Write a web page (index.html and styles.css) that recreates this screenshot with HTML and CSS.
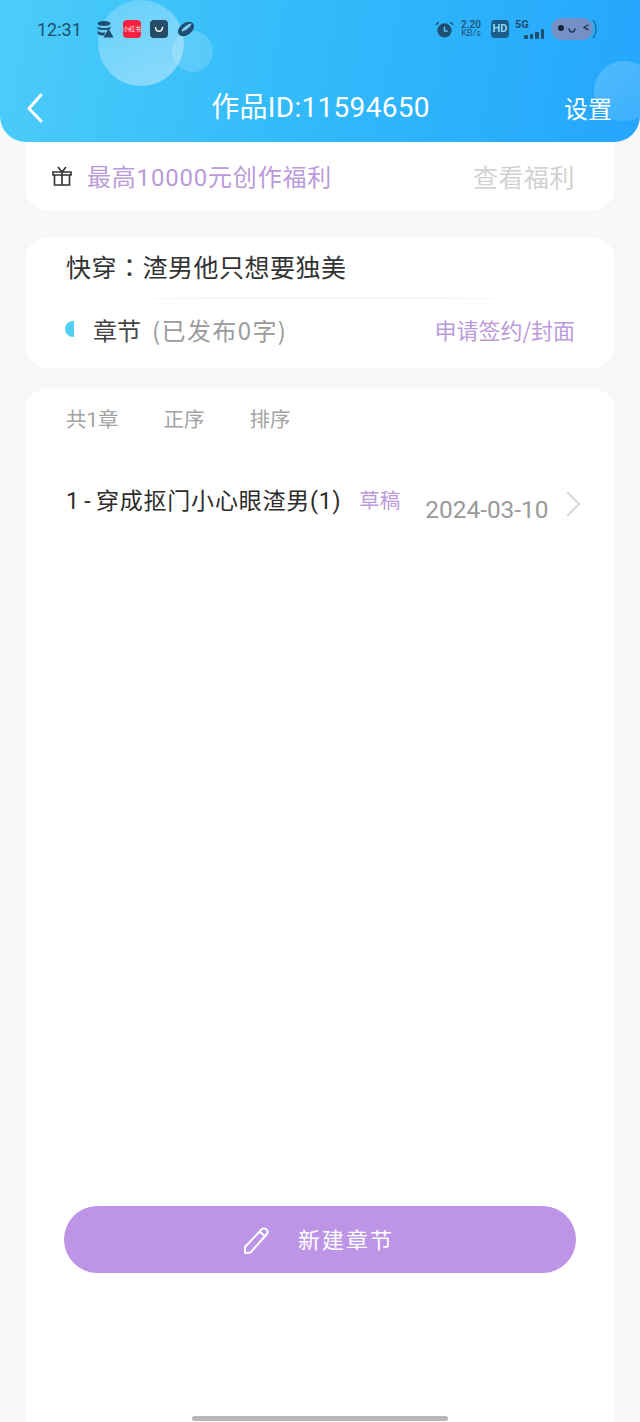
FILE: index.html
```html
<!DOCTYPE html>
<html lang="zh-CN">
<head>
    <meta charset="UTF-8">
    <meta name="viewport" content="width=device-width, initial-scale=1.0">
    <title>作品ID:11594650</title>
    <link rel="stylesheet" href="styles.css">
</head>
<body>
    <header class="top">
        <span class="bubble bubble-big"></span>
        <span class="bubble bubble-small"></span>
        <span class="bubble bubble-right"></span>

        <!-- status bar -->
        <div class="status">
            <div class="status-left">
                <span class="time">12:31</span>
                <svg class="s-icon" viewBox="0 0 18 18" width="18" height="18">
                    <ellipse cx="8" cy="3.5" rx="6.5" ry="2.5" fill="#1f4f70"/>
                    <path d="M1.500 6.500c2 2 11 2 13 0v2c-2 2-11 2-13 0zM1.500 11c2 1.500 6 1.800 8 1.300l-1.500 3.200c-3 0-5.500-.6-6.500-1.800z" fill="#1f4f70"/>
                    <path d="M12.500 8.500l5 9h-10z" fill="#1f4f70"/>
                </svg>
                <span class="red-app">小红书</span>
                <span class="bag-app">
                    <svg viewBox="0 0 18 18" width="18" height="18"><path d="M5.500 6.500c.5 5 6.500 5 7 0" fill="none" stroke="#fff" stroke-width="1.500" stroke-linecap="round"/></svg>
                </span>
                <svg class="s-icon" viewBox="0 0 18 18" width="18" height="18">
                    <ellipse cx="9" cy="9" rx="9" ry="6" transform="rotate(-38 9 9)" fill="#1f4f70"/>
                    <ellipse cx="9.500" cy="7.500" rx="6" ry="1.700" transform="rotate(-38 9.500 7.500)" fill="#7fcdf3"/>
                </svg>
            </div>
            <div class="status-right">
                <svg class="s-icon" viewBox="0 0 20 20" width="19" height="19">
                    <circle cx="10" cy="11" r="7.500" fill="#1f4f70"/>
                    <path d="M10 7v4.500h3.500" fill="none" stroke="#5cc0ee" stroke-width="1.500"/>
                    <path d="M1 5l3-3M19 5l-3-3" stroke="#1f4f70" stroke-width="1.500"/>
                </svg>
                <span class="speed"><b>2.20</b><i>KB/s</i></span>
                <span class="hd">HD</span>
                <span class="signal">
                    <span class="five-g">5G</span>
                    <span class="bars"><i class="b1"></i><i class="b2"></i><i class="b3"></i><i class="b4"></i></span>
                </span>
                <svg class="s-icon" viewBox="0 0 46 24" width="46" height="24">
                    <rect x="0" y="1" width="42" height="22" rx="11" fill="#7391c4"/>
                    <circle cx="10" cy="11" r="3" fill="#14263a"/>
                    <path d="M18 12c1 4 5 4 6 0" fill="none" stroke="#1f3b55" stroke-width="1.400" stroke-linecap="round"/>
                    <path d="M37 8l-4 2.500 4 2" fill="none" stroke="#1f3b55" stroke-width="1.400" stroke-linecap="round"/>
                    <path d="M42 3c4 5 4 13 0 18" fill="none" stroke="#1f4f70" stroke-width="1"/>
                </svg>
            </div>
        </div>

        <!-- nav -->
        <div class="nav">
            <svg class="back" viewBox="0 0 20 32" width="20" height="32">
                <path d="M16 3L4 16.500 16 29" fill="none" stroke="#fff" stroke-width="3" stroke-linecap="round" stroke-linejoin="round"/>
            </svg>
            <h1 class="nav-title">作品ID:11594650</h1>
            <span class="nav-set">设置</span>
        </div>
    </header>

    <main class="content">
        <section class="card welfare">
            <svg class="gift" viewBox="0 0 22 22" width="22" height="22">
                <path d="M2 7h18v3H2zM3.500 10v10h15V10M11 7v13M7 2l4 5 4-5" fill="none" stroke="#333" stroke-width="1.600"/>
            </svg>
            <span class="welfare-text">最高10000元创作福利</span>
            <span class="welfare-link">查看福利</span>
        </section>

        <section class="card book">
            <div class="book-title">快穿<span class="colon" lang="zh-TW">：</span>渣男他只想要独美</div>
            <div class="book-line"></div>
            <div class="book-row">
                <span class="dot"></span>
                <span class="chapter-label">章节</span>
                <span class="chapter-count">(已发布0字)</span>
                <span class="apply">申请签约/封面</span>
            </div>
        </section>

        <section class="card chapters">
            <div class="tabs">
                <span>共1章</span>
                <span>正序</span>
                <span>排序</span>
            </div>
            <div class="chapter">
                <span class="chapter-name">1 - 穿成抠门小心眼渣男(1)</span>
                <span class="draft">草稿</span>
                <span class="date">2024-03-10</span>
                <svg class="arrow" viewBox="0 0 16 26" width="16" height="26">
                    <path d="M2 2l11 11L2 24" fill="none" stroke="#d9d9d9" stroke-width="2.200" stroke-linecap="round" stroke-linejoin="round"/>
                </svg>
            </div>
            <button class="new-btn">
                <svg viewBox="0 0 30 30" width="30" height="30">
                    <path d="M3 28v-6L19.500 4.500c1.500-1.500 3.500-1.500 5 0s1.500 3.500 0 5L8.500 27.500z M18 7l6 5" fill="none" stroke="#fff" stroke-width="2" stroke-linejoin="round"/>
                </svg>
                <span>新建章节</span>
            </button>
        </section>
    </main>

    <div class="home-bar"></div>
</body>
</html>
```

FILE: styles.css
```css
* {
    box-sizing: border-box;
}
html, body {
    margin: 0;
    height: 1422px;
}
body {
    position: relative;
    overflow: hidden;
    background: #f8f8f8;
    font-family: "Noto Sans CJK SC", "Noto Sans", sans-serif;
}

/* header */
.top {
    position: relative;
    height: 142px;
    overflow: hidden;
    border-radius: 0 0 26px 26px;
    background: linear-gradient(100deg, #4cccf8 0%, #33bbfa 45%, #24a6fd 100%);
    color: #fff;
}
.bubble {
    position: absolute;
    border-radius: 50%;
}
.bubble-big {
    left: 98px;
    top: 0;
    width: 86px;
    height: 86px;
    background: linear-gradient(150deg, rgba(255,255,255,0.18), rgba(255,255,255,0.42));
}
.bubble-small {
    left: 172px;
    top: 31px;
    width: 41px;
    height: 41px;
    background: rgba(255,255,255,0.16);
}
.bubble-right {
    left: 594px;
    top: 61px;
    width: 60px;
    height: 60px;
    background: linear-gradient(150deg, rgba(255,255,255,0.2), rgba(255,255,255,0.1));
}
.status {
    position: relative;
    display: flex;
    justify-content: space-between;
    align-items: center;
    height: 30px;
    margin-top: 0;
    padding: 14px 43px 0 37px;
    box-sizing: content-box;
    color: #1f4f70;
}
.status-left, .status-right {
    display: flex;
    align-items: center;
}
.time {
    width: 59px;
    font-family: "Roboto", sans-serif;
    font-size: 18px;
}
.s-icon {
    display: block;
}
.red-app {
    display: block;
    width: 18px;
    height: 18px;
    margin: 0 9px 0 9px;
    border-radius: 4px;
    background: #f5213f;
    color: #fff;
    font-size: 6px;
    line-height: 18px;
    text-align: center;
    white-space: nowrap;
    overflow: hidden;
}
.bag-app {
    display: block;
    width: 18px;
    height: 18px;
    margin-right: 9px;
    border-radius: 4px;
    background: #264c68;
}
.speed {
    display: flex;
    flex-direction: column;
    width: 20px;
    margin: 0 10px 0 7px;
    font-family: "Roboto", sans-serif;
    line-height: 9px;
    text-align: center;
}
.speed b {
    font-weight: 500;
    font-size: 10px;
}
.speed i {
    font-style: normal;
    font-size: 9px;
}
.hd {
    width: 18px;
    height: 18px;
    border-radius: 4px;
    background: #1a5d88;
    color: #8fd6f8;
    font-family: "Roboto", sans-serif;
    font-size: 11px;
    font-weight: 700;
    line-height: 18px;
    text-align: center;
}
.signal {
    position: relative;
    width: 29px;
    height: 20px;
    margin: 0 7px 0 6px;
}
.five-g {
    position: absolute;
    left: 0;
    top: -1px;
    font-family: "Roboto", sans-serif;
    font-size: 11px;
    font-weight: 700;
}
.bars {
    position: absolute;
    right: 0;
    bottom: 0;
    display: flex;
    align-items: flex-end;
    gap: 2px;
}
.bars i {
    display: block;
    width: 3.500px;
    border-radius: 1px;
    background: #1f4f70;
}
.b1 { height: 4px; }
.b2 { height: 5px; }
.b3 { height: 7px; }
.b4 { height: 10px; }
.nav {
    position: relative;
    display: flex;
    align-items: center;
    height: 36px;
    margin-top: 46px;
    padding: 0 28px 0 25px;
}
.back {
    margin-right: 32px;
}
.nav-title {
    flex: 1;
    margin: 0;
    font-size: 28px;
    font-weight: 400;
    line-height: 36px;
    text-align: center;
    font-family: "Roboto", "Noto Sans CJK SC", sans-serif;
    letter-spacing: 0.300px;
}
.nav-set {
    font-size: 24px;
    line-height: 36px;
}

/* cards */
.content {
    display: flex;
    flex-direction: column;
    gap: 20px;
    padding: 0 25px;
}
.card {
    background: #fff;
    border-radius: 24px;
}
.welfare {
    display: flex;
    align-items: center;
    height: 69px;
    padding: 0 40px 2px 26px;
    border-radius: 0 0 24px 24px;
}
.gift {
    margin-right: 14px;
}
.welfare-text {
    flex: 1;
    color: #bb9ad9;
    font-size: 24px;
    font-family: "Roboto", "Noto Sans CJK SC", sans-serif;
    letter-spacing: 0.800px;
}
.welfare-link {
    color: #d2d2d2;
    font-size: 25px;
    letter-spacing: 0.500px;
}
.book {
    height: 131px;
    margin-top: 6px;
    padding: 11px 40px 0 41px;
}
.book-title {
    color: #333;
    font-size: 25px;
    line-height: 36px;
    letter-spacing: 0.500px;
}
/* TC form: the colon sits in the middle of its box */
.colon {
    font-family: "Noto Sans CJK TC", sans-serif;
}
.book-line {
    height: 1px;
    margin: 14px 22px 0 27px;
    background: linear-gradient(90deg, #fff, #f0f0f0 30%, #f0f0f0 70%, #fff);
}
.book-row {
    display: flex;
    align-items: center;
    height: 60px;
    padding-left: 1px;
}
.dot {
    width: 9px;
    height: 16px;
    margin: 0 19px 0 -2px;
    border-radius: 9px 0 0 9px;
    background: #4fd0f4;
}
.chapter-label {
    margin-right: 11px;
    color: #444;
    font-size: 24px;
}
.chapter-count {
    flex: 1;
    color: #9b9b9b;
    font-size: 24px;
    letter-spacing: 1.400px;
}
.apply {
    color: #bb9ad9;
    font-size: 22px;
}
.chapters {
    position: relative;
    height: 1040px;
    border-radius: 24px 24px 0 0;
}
.tabs {
    display: flex;
    gap: 45px;
    padding: 18px 0 0 41px;
    color: #a3a3a3;
    font-size: 20.500px;
    line-height: 28px;
    font-family: "Roboto", "Noto Sans CJK SC", sans-serif;
}
.chapter {
    display: flex;
    align-items: center;
    height: 50px;
    margin-top: 40px;
    padding-left: 41px;
}
.chapter-name {
    color: #2c2c2c;
    font-size: 23px;
    font-family: "Roboto", "Noto Sans CJK SC", sans-serif;
    letter-spacing: 0.800px;
    word-spacing: -2px;
    white-space: nowrap;
}
.draft {
    margin-left: 18px;
    color: #bb9ad9;
    font-size: 20.500px;
}
.date {
    margin: 21px 0 0 25px;
    color: #9a9a9a;
    font-family: "Roboto", sans-serif;
    font-size: 24.400px;
}
.arrow {
    margin: 10px 0 0 18px;
}
.new-btn {
    position: absolute;
    left: 39px;
    top: 818px;
    display: flex;
    align-items: center;
    justify-content: center;
    gap: 26px;
    width: 512px;
    height: 67px;
    padding: 0 4px 0 0;
    border: 0;
    border-radius: 34px;
    background: #bd94e6;
    color: #fff;
    font-family: inherit;
    font-size: 22px;
    letter-spacing: 2px;
}
.new-btn span {
    margin-top: -4px;
}
.home-bar {
    position: absolute;
    left: 192px;
    bottom: 1px;
    width: 256px;
    height: 5px;
    border-radius: 3px;
    background: #b8b8b8;
}
```
